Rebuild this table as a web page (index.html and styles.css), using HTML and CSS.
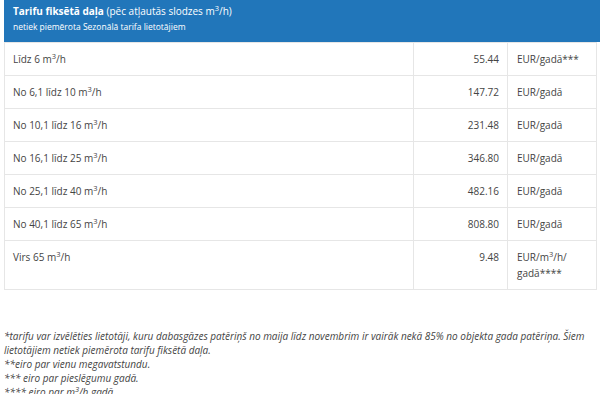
FILE: index.html
```html
<!DOCTYPE html>
<html lang="lv">
<head>
<meta charset="utf-8">
<link rel="stylesheet" href="styles.css">
</head>
<body>
<div class="page">
  <div class="head">
    <div class="title"><b>Tarifu fiksētā daļa</b> (pēc atļautās slodzes m<sup>3</sup>/h)</div>
    <div class="sub">netiek piemērota Sezonālā tarifa lietotājiem</div>
  </div>
  <table class="tbl">
    <tr><td class="c1">Līdz 6 m<sup>3</sup>/h</td><td class="c2">55.44</td><td class="c3">EUR/gadā***</td></tr>
    <tr><td class="c1">No 6,1 līdz 10 m<sup>3</sup>/h</td><td class="c2">147.72</td><td class="c3">EUR/gadā</td></tr>
    <tr><td class="c1">No 10,1 līdz 16 m<sup>3</sup>/h</td><td class="c2">231.48</td><td class="c3">EUR/gadā</td></tr>
    <tr><td class="c1">No 16,1 līdz 25 m<sup>3</sup>/h</td><td class="c2">346.80</td><td class="c3">EUR/gadā</td></tr>
    <tr><td class="c1">No 25,1 līdz 40 m<sup>3</sup>/h</td><td class="c2">482.16</td><td class="c3">EUR/gadā</td></tr>
    <tr><td class="c1">No 40,1 līdz 65 m<sup>3</sup>/h</td><td class="c2">808.80</td><td class="c3">EUR/gadā</td></tr>
    <tr><td class="c1">Virs 65 m<sup>3</sup>/h</td><td class="c2">9.48</td><td class="c3">EUR/m<sup>3</sup>/h/<br>gadā****</td></tr>
  </table>
  <div class="notes">
    <p>*tarifu var izvēlēties lietotāji, kuru dabasgāzes patēriņš no maija līdz novembrim ir vairāk nekā 85% no objekta gada patēriņa. Šiem lietotājiem netiek piemērota tarifu fiksētā daļa.</p>
    <p>**eiro par vienu megavatstundu.</p>
    <p>*** eiro par pieslēgumu gadā.</p>
    <p>**** eiro par m<sup>3</sup>/h gadā.</p>
  </div>
</div>
</body>
</html>
```
FILE: styles.css
```css
html, body {
  margin: 0;
  padding: 0;
  background: #fff;
  overflow: hidden;
}
body {
  font-family: "Open Sans", "DejaVu Sans", sans-serif;
  color: #444;
  font-size: 10px;
}
.page {
  padding-left: 4px;
  width: 596px;
}
sup {
  font-size: 0.75em;
  line-height: 0;
  vertical-align: 0.5em;
}
.head {
  background: #2176ba;
  color: #fff;
  height: 42px;
  box-sizing: border-box;
  padding: 3px 9px 0;
}
.title {
  font-size: 10px;
  line-height: 16px;
}
.title b { font-weight: 700; }
.sub {
  font-size: 8.5px;
  line-height: 16px;
}
.tbl {
  border-collapse: collapse;
  width: 593px;
  border: 1px solid #e6e6e6;
  border-top: none;
}
.tbl td {
  border-top: 1px solid #e6e6e6;
  padding: 8px;
  line-height: 16px;
  vertical-align: top;
}
.tbl td + td { border-left: 1px solid #e6e6e6; }
.c1 { width: 392px; }
.c2 { width: 77px; text-align: right; }
.c3 { padding-left: 9px !important; }
.notes {
  margin-top: 39px;
  font-style: italic;
  width: 600px;
  line-height: 14px;
}
.notes p { margin: 0; }
```
